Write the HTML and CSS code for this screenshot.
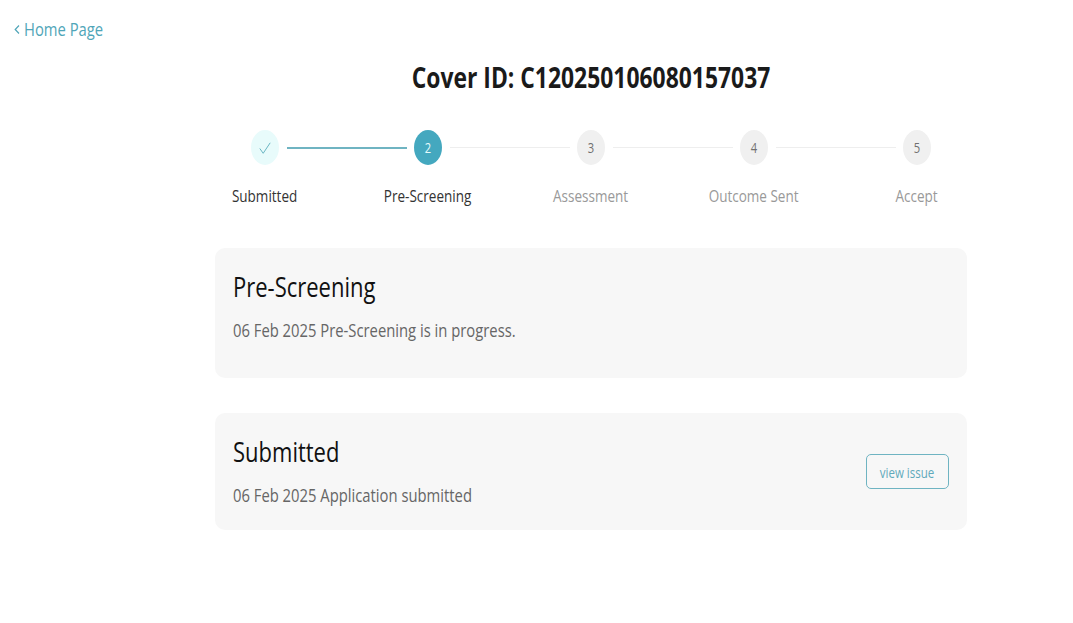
FILE: index.html
```html
<!DOCTYPE html>
<html lang="en">
<head>
<meta charset="utf-8">
<title>Cover status</title>
<link rel="stylesheet" href="styles.css">
</head>
<body>
<a class="back" href="#"><svg class="back-icon" width="6" height="11" viewBox="0 0 6 11"><path d="M5 1.5 1.2 5.5l3.8 4" fill="none" stroke="currentColor" stroke-width="1.2"/></svg><span class="squeeze from-left">Home Page</span></a>
<main class="content">
  <h1 class="title squeeze">Cover ID: C120250106080157037</h1>
  <section class="stepper">
    <div class="track">
      <span class="dot dot-done"><svg width="12" height="12" viewBox="0 0 12 12"><path d="M.8 6.5 4.2 11.3 11.2 .8" fill="none" stroke="#6ab5c2" stroke-width="1"/></svg></span>
      <span class="line line-done"></span>
      <span class="dot dot-active"><span class="squeeze">2</span></span>
      <span class="line"></span>
      <span class="dot"><span class="squeeze">3</span></span>
      <span class="line"></span>
      <span class="dot"><span class="squeeze">4</span></span>
      <span class="line"></span>
      <span class="dot"><span class="squeeze">5</span></span>
    </div>
    <div class="labels">
      <span class="label label-on squeeze">Submitted</span>
      <span class="label label-on squeeze">Pre-Screening</span>
      <span class="label squeeze">Assessment</span>
      <span class="label squeeze">Outcome Sent</span>
      <span class="label squeeze">Accept</span>
    </div>
  </section>
  <section class="card card-first">
    <div class="card-text squeeze from-left">
      <h2 class="card-title">Pre-Screening</h2>
      <p class="card-desc">06 Feb 2025 Pre-Screening is in progress.</p>
    </div>
  </section>
  <section class="card card-second">
    <div class="card-text card-text-raised squeeze from-left">
      <h2 class="card-title">Submitted</h2>
      <p class="card-desc">06 Feb 2025 Application submitted</p>
    </div>
    <button class="issue" type="button"><span class="squeeze">view issue</span></button>
  </section>
</main>
</body>
</html>
```
FILE: styles.css
```css
* { box-sizing: border-box; }
html, body { margin: 0; padding: 0; background: #fff; }
body {
  height: 623px;
  overflow: hidden;
  font-family: "Open Sans", "Noto Sans", sans-serif;
  color: #222;
}
/* Text is narrowed horizontally, as it is in the reference capture. */
.squeeze { display: inline-block; transform: scaleX(0.8); transform-origin: center; }
.from-left { transform-origin: left center; }
.back {
  display: flex;
  align-items: center;
  gap: 4px;
  height: 40px;
  padding: 18px 0 0 14px;
  color: #4fa5b8;
  font-size: 18.5px;
  line-height: 22px;
  text-decoration: none;
}
.back-icon { flex: none; }
.content { width: 752px; margin: 0 0 0 215px; }
.title {
  display: block;
  margin: 14px 0 0;
  height: 46px;
  text-align: center;
  font-size: 28.6px;
  line-height: 46px;
  font-weight: 700;
  color: #1a1a1a;
}
.stepper { width: 815px; margin: 30px 0 0 -31.5px; }
.track { display: flex; align-items: center; padding: 0 67.5px; height: 35px; }
.dot {
  flex: none;
  display: flex;
  align-items: center;
  justify-content: center;
  width: 28px;
  height: 35px;
  border-radius: 50%;
  background: #f0f0f0;
  color: #707070;
  font-size: 14px;
}
.dot-done { background: #e8fbfb; }
.dot-active { background: #44a8bf; color: #e8fbfb; }
.line { flex: 1; height: 1px; margin: 0 7px 0 8px; background: #eeeeee; }
.line-done { height: 2px; background: #6fb4c2; }
.labels { display: grid; grid-template-columns: repeat(5, 1fr); margin: 19px 0 0 -1px; }
.label { text-align: center; font-size: 16.9px; line-height: 23px; color: #999; }
.label-on { color: #333; }
.card {
  display: flex;
  align-items: center;
  justify-content: space-between;
  background: #f7f7f7;
  border-radius: 10px;
  padding: 0 18px 0 17.5px;
}
.card-first { height: 130px; margin-top: 41px; align-items: flex-start; padding-top: 20px; }
.card-second { height: 117px; margin-top: 35px; }
.card-text-raised { padding-bottom: 3px; }
.card-title { margin: 0; font-size: 27.5px; line-height: 38px; font-weight: 400; color: #111; }
.card-desc { margin: 12px 0 0; font-size: 18.5px; line-height: 24px; color: #666; }
.issue {
  width: 83px;
  height: 35px;
  padding: 1px 0 0;
  background: transparent;
  border: 1px solid #6fb4c2;
  border-radius: 5px;
  color: #5fa9bb;
  font: inherit;
  font-size: 14.4px;
}
```
